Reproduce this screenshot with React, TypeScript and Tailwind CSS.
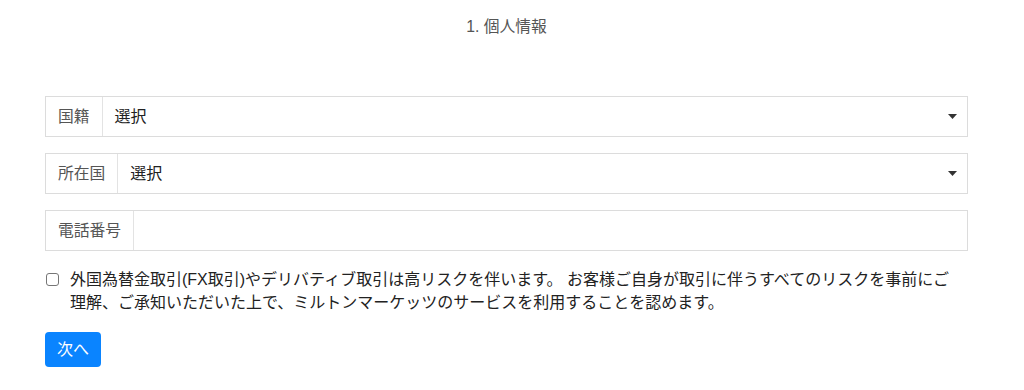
import React from "react";

const font = { fontFamily: '"Liberation Sans", "Noto Sans CJK JP", sans-serif' };

function Caret() {
  return (
    <svg width="9" height="5" viewBox="0 0 9 5" className="shrink-0">
      <path d="M0 0 L9 0 L4.5 5 Z" fill="#333" />
    </svg>
  );
}

function Row({ label, select }: { label: string; select?: boolean }) {
  return (
    <div className="flex h-[41px] border border-[#dcdcdc] bg-white">
      <div className="flex items-center px-[12px] border-r border-[#e3e3e3] text-[15.75px] text-[#555]">
        {label}
      </div>
      <div className="flex flex-1 items-center justify-between pl-[12px] pr-[10px] text-[16px] text-[#222]">
        {select ? (
          <>
            <span>選択</span>
            <Caret />
          </>
        ) : null}
      </div>
    </div>
  );
}

export default function App() {
  return (
    <div className="w-[1024px] h-[390px] bg-white overflow-hidden" style={font}>
      <div className="ml-[45px] w-[923px]">
        <div className="pt-[16px] h-[96px] text-center text-[15.75px] text-[#555] leading-[22px]">
          1. 個人情報
        </div>
        <div className="flex flex-col gap-[16px]">
          <Row label="国籍" select />
          <Row label="所在国" select />
          <Row label="電話番号" />
        </div>
        <div className="mt-[17px] flex items-start">
          <div className="mt-[5px] ml-[1px] w-[13px] h-[13px] shrink-0 rounded-[3px] border border-[#767676] bg-white" />
          <p className="ml-[11px] flex-1 text-[16px] leading-[23px] text-[#222]">
            外国為替金取引(FX取引)やデリバティブ取引は高リスクを伴います。 お客様ご自身が取引に伴うすべてのリスクを事前にご
            <br />
            理解、ご承知いただいた上で、ミルトンマーケッツのサービスを利用することを認めます。
          </p>
        </div>
        <button className="mt-[18px] h-[35px] px-[12px] rounded-[4px] bg-[#0a84ff] text-white text-[16px]">
          次へ
        </button>
      </div>
    </div>
  );
}
